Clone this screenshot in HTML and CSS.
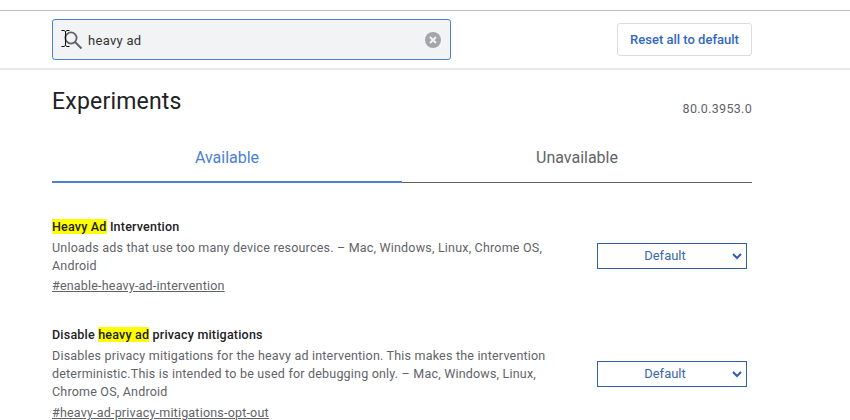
FILE: index.html
```html
<!DOCTYPE html>
<html lang="en">
<head>
<meta charset="utf-8">
<title>Experiments</title>
<link rel="stylesheet" href="styles.css">
</head>
<body>
<header class="topbar">
  <div class="search">
    <svg class="search-icon" width="24" height="24" viewBox="0 0 24 24">
      <circle cx="12" cy="10" r="5.600" fill="none" stroke="#5f6368" stroke-width="1.800"/>
      <path d="M16 14 L22.500 20.500" stroke="#5f6368" stroke-width="2" fill="none"/>
      <path d="M2.500 2.500h2.500l1.500 1 1.500-1h2.500M6.500 3.500V17.500M2.500 18.500h2.500l1.500-1 1.500 1h2.500" stroke="#111" stroke-width="1" fill="none"/>
    </svg>
    <span class="search-text">heavy ad</span>
    <svg class="clear-icon" width="16" height="16" viewBox="0 0 16 16">
      <circle cx="8" cy="8" r="8" fill="#a3a5a8"/>
      <path d="M5 5 L11 11 M11 5 L5 11" stroke="#f1f3f4" stroke-width="2"/>
    </svg>
  </div>
  <button class="reset">Reset all to default</button>
</header>
<main class="content">
  <div class="title-row">
    <h1>Experiments</h1>
    <span class="version">80.0.3953.0</span>
  </div>
  <nav class="tabs">
    <div class="tab tab-active">Available</div>
    <div class="tab">Unavailable</div>
  </nav>
  <section class="flag flag-first">
    <div class="flag-text">
      <h2><mark>Heavy Ad</mark> Intervention</h2>
      <p>Unloads ads that use too many device resources. – Mac, Windows, Linux, Chrome OS, Android</p>
      <a href="#">#enable-heavy-ad-intervention</a>
    </div>
    <div class="select">Default
      <svg class="chev" width="10" height="7" viewBox="0 0 10 7"><path d="M1 1 L5 5 L9 1" fill="none" stroke="#2f5fa8" stroke-width="2"/></svg>
    </div>
  </section>
  <section class="flag flag-second">
    <div class="flag-text">
      <h2>Disable <mark>heavy ad</mark> privacy mitigations</h2>
      <p>Disables privacy mitigations for the heavy ad intervention. This makes the intervention deterministic.This is intended to be used for debugging only. – Mac, Windows, Linux, Chrome OS, Android</p>
      <a href="#">#heavy-ad-privacy-mitigations-opt-out</a>
    </div>
    <div class="select">Default
      <svg class="chev" width="10" height="7" viewBox="0 0 10 7"><path d="M1 1 L5 5 L9 1" fill="none" stroke="#2f5fa8" stroke-width="2"/></svg>
    </div>
  </section>
</main>
</body>
</html>
```
FILE: styles.css
```css
* { box-sizing: border-box; }
html, body { margin: 0; height: 420px; overflow: hidden; background: #fff; }
body { font-family: Roboto, "Liberation Sans", sans-serif; color: #202124; padding-top: 10px; }

.topbar {
  height: 60px;
  border-top: 1px solid #bdbdbd;
  border-bottom: 2px solid #e8e8e8;
  display: flex;
  align-items: center;
  justify-content: space-between;
  padding: 0 98px 0 52px;
}
.search {
  width: 399px;
  height: 41px;
  background: #f1f3f4;
  border: 1px solid #4a82d0;
  border-radius: 3px;
  display: flex;
  align-items: center;
  padding: 0 9px 0 6px;
}
.search-icon { flex: none; }
.search-text { flex: 1; margin-left: 5px; margin-top: 2px; font-size: 13px; letter-spacing: .3px; color: #333; }
.clear-icon { flex: none; }
.reset {
  width: 135px;
  height: 33px;
  background: #fff;
  border: 1px solid #dadce0;
  border-radius: 3px;
  font: 500 13px Roboto, "Liberation Sans", sans-serif;
  color: #3367c0;
  padding: 0;
}

.content { padding: 0 98px 0 52px; }
.title-row { display: flex; justify-content: space-between; height: 63px; }
h1 { margin: 18px 0 0; font-size: 23px; line-height: 28px; font-weight: 400; letter-spacing: .2px; color: #202124; }
.version { margin-top: 31px; font-size: 12.500px; line-height: 16px; color: #5f6368; letter-spacing: .3px; }

.tabs { display: flex; height: 50px; border-bottom: 1px solid #5f6368; }
.tab { flex: 1; text-align: center; font-size: 16px; line-height: 20px; padding-top: 15px; color: #5f6368; height: 50px; }
.tab-active { color: #4a7fd6; border-bottom: 2px solid #4a82d0; height: 50px; }

.flag { display: flex; justify-content: space-between; align-items: flex-start; }
.flag-first { margin-top: 36px; }
.flag-second { margin-top: 32px; }
.flag-text { width: 505px; }
h2 { margin: 0; font-size: 12.500px; line-height: 16px; font-weight: 500; letter-spacing: .2px; color: #202124; }
mark { background: #ffff00; color: inherit; }
p { margin: 4px 0 0; font-size: 12.500px; line-height: 18px; letter-spacing: .2px; color: #5f6368; }
a { display: block; margin-top: 2px; font-size: 12.500px; line-height: 18px; letter-spacing: .2px; color: #5f6368; text-decoration: underline; }
.flag-second a { margin-top: 3px; }

.select {
  position: relative;
  width: 150px;
  height: 26px;
  margin-right: 5px;
  border: 1px solid #2f5fa8;
  font-size: 13px;
  line-height: 24px;
  text-align: center;
  color: #3a66ad;
  padding-right: 14px;
}
.flag-first .select { margin-top: 24px; }
.flag-second .select { margin-top: 34px; }
.chev { position: absolute; right: 4px; top: 9px; }
```
